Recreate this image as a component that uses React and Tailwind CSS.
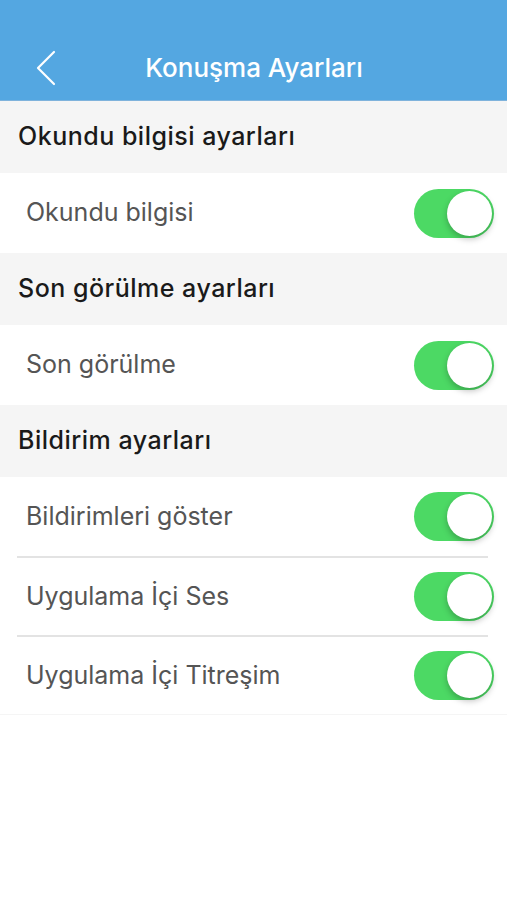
import { useState } from "react";

const SECTIONS = [
  {
    title: "Okundu bilgisi ayarları",
    rows: [{ key: "read", label: "Okundu bilgisi" }],
  },
  {
    title: "Son görülme ayarları",
    rows: [{ key: "seen", label: "Son görülme" }],
  },
  {
    title: "Bildirim ayarları",
    rows: [
      { key: "notify", label: "Bildirimleri göster" },
      { key: "sound", label: "Uygulama İçi Ses" },
      { key: "vibrate", label: "Uygulama İçi Titreşim" },
    ],
  },
];

function Toggle({ on, onChange }) {
  return (
    <button
      type="button"
      onClick={onChange}
      className={`relative w-[80px] h-[49px] rounded-full transition-colors ${
        on ? "bg-[#4cd964]" : "bg-[#e5e5e5]"
      }`}
    >
      <span
        className={`absolute top-[2px] w-[45px] h-[45px] rounded-full bg-white shadow-[0_3px_6px_rgba(0,0,0,0.25)] transition-all ${
          on ? "left-[33px]" : "left-[2px]"
        }`}
      />
    </button>
  );
}

export default function App() {
  const [values, setValues] = useState({
    read: true,
    seen: true,
    notify: true,
    sound: true,
    vibrate: true,
  });

  const flip = (key) => setValues((prev) => ({ ...prev, [key]: !prev[key] }));

  return (
    <div className="min-h-screen bg-white font-['Inter','Noto_Sans',sans-serif]">
      {/* Header */}
      <div className="h-[101px] bg-[#54a7e1] border-b border-[#7fb3dc] flex items-end">
        <div className="h-[66px] w-full flex items-center relative">
          <button className="absolute left-[34px] top-[-18px] w-[24px] h-[36px] translate-y-[34px]">
            <svg viewBox="0 0 24 36" className="w-[24px] h-[36px]" fill="none">
              <path d="M20 2L4 18l16 16" stroke="white" strokeWidth="2.2" strokeLinecap="round" strokeLinejoin="round" />
            </svg>
          </button>
          <h1 className="w-full text-center text-white text-[26px] font-medium tracking-[0px] pl-[1px]">
            Konuşma Ayarları
          </h1>
        </div>
      </div>

      {SECTIONS.map((section) => (
        <div key={section.title}>
          <div className="h-[72px] bg-[#f5f5f5] flex items-center px-[18px]">
            <span className="text-[25px] font-medium text-[#1a1a1a] tracking-[0.5px]">
              {section.title}
            </span>
          </div>
          {section.rows.map((row, i) => (
            <div key={row.key} className="bg-white">
              {i > 0 && <div className="mx-[17px] w-[471px] border-t-2 border-[#e3e3e3]" />}
              <div
                className={`${
                  section.rows.length === 1 ? "h-[80px]" : i === 0 ? "h-[79px]" : "h-[77px]"
                } flex items-center justify-between pl-[26px] pr-[13px]`}
              >
                <span className="text-[25px] text-[#555555] tracking-[0px]">{row.label}</span>
                <Toggle on={values[row.key]} onChange={() => flip(row.key)} />
              </div>
            </div>
          ))}
        </div>
      ))}
      <div className="border-t border-[#f5f5f5]" />
    </div>
  );
}
